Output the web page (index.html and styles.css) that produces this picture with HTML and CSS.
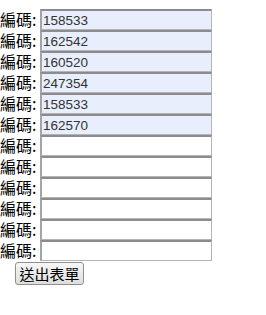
FILE: index.html
```html
<!DOCTYPE html>
<html lang="zh-Hant">
<head>
    <meta charset="UTF-8">
    <title>編碼</title>
    <link rel="stylesheet" href="styles.css">
</head>
<body>
    <form class="code-form">
        <div class="row"><span class="label">編碼:</span><input class="code filled" type="text" value="158533"></div>
        <div class="row"><span class="label">編碼:</span><input class="code filled" type="text" value="162542"></div>
        <div class="row"><span class="label">編碼:</span><input class="code filled" type="text" value="160520"></div>
        <div class="row"><span class="label">編碼:</span><input class="code filled" type="text" value="247354"></div>
        <div class="row"><span class="label">編碼:</span><input class="code filled" type="text" value="158533"></div>
        <div class="row"><span class="label">編碼:</span><input class="code filled" type="text" value="162570"></div>
        <div class="row"><span class="label">編碼:</span><input class="code" type="text"></div>
        <div class="row"><span class="label">編碼:</span><input class="code" type="text"></div>
        <div class="row"><span class="label">編碼:</span><input class="code" type="text"></div>
        <div class="row"><span class="label">編碼:</span><input class="code" type="text"></div>
        <div class="row"><span class="label">編碼:</span><input class="code" type="text"></div>
        <div class="row"><span class="label">編碼:</span><input class="code" type="text"></div>
        <div class="actions"><button type="submit" class="submit-btn">送出表單</button></div>
    </form>
</body>
</html>
```

FILE: styles.css
```css
body {
    margin: 9px 0 0 0;
    font-family: "Noto Sans CJK TC", sans-serif;
    background: #fff;
}
.row {
    display: flex;
    align-items: center;
    height: 21px;
}
.label {
    width: 40px;
    font-size: 16px;
    line-height: 21px;
    color: #000;
    white-space: nowrap;
}
.code {
    box-sizing: border-box;
    width: 172px;
    height: 21px;
    margin: 0;
    padding: 1px 1px;
    font-family: "Liberation Sans", Arial, sans-serif;
    font-size: 13.5px;
    color: #333;
    background: #fff;
    border: 1px solid #b4b4b4;
    border-top: 2px solid #8c8c8c;
    border-left: 2px solid #a4a4a4;
    outline: none;
}
.code.filled {
    background: #e8eefb;
}
.actions {
    display: flex;
    padding: 1px 0 0 15px;
}
.submit-btn {
    box-sizing: border-box;
    height: 23px;
    width: 69px;
    padding: 0;
    font-family: "Noto Sans CJK TC", sans-serif;
    font-size: 15px;
    line-height: 18px;
    color: #000;
    background: linear-gradient(#f7f7f7, #dddddd);
    border: 1px solid #8f8f8f;
    border-radius: 3px;
}
```
